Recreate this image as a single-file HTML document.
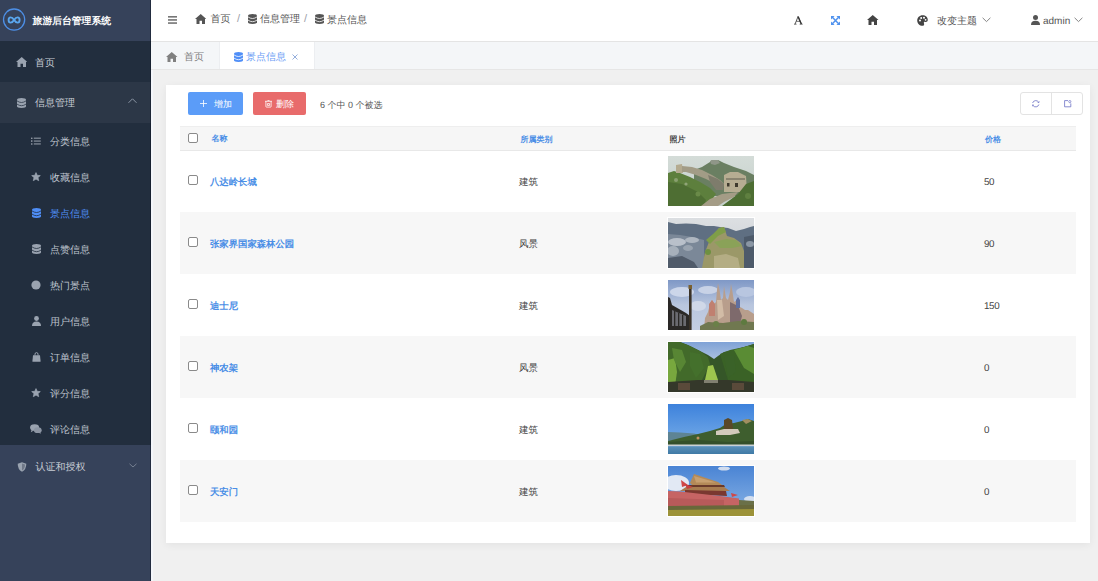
<!DOCTYPE html>
<html><head><meta charset="utf-8">
<style>
*{margin:0;padding:0;box-sizing:border-box}
html,body{width:1098px;height:581px;overflow:hidden;background:#f0f0f0;font-family:"Liberation Sans",sans-serif;text-rendering:geometricPrecision}
.abs{position:absolute;display:block}
.t{position:absolute;white-space:nowrap;line-height:1}
#side{position:absolute;left:0;top:0;width:151px;height:581px;background:#36425a}
.st{color:#c8cdd5;font-size:10px}
#nav{position:absolute;left:151px;top:0;width:947px;height:42px;background:#fff;border-bottom:1px solid #e4e4e4}
#tags{position:absolute;left:151px;top:42px;width:947px;height:28px;background:#f4f6f8;border-bottom:1px solid #e6e6e6}
#card{position:absolute;left:166px;top:85px;width:924px;height:458px;background:#fff;box-shadow:0 2px 8px rgba(0,0,0,.06)}
.bc{color:#555;font-size:10px}
.hd{font-size:8px;font-weight:bold;color:#4a8ee6}
.nm{font-size:9.35px;text-rendering:geometricPrecision;font-weight:bold;color:#4a8ee6}
.cl{font-size:9.5px;color:#444}
.cb{position:absolute;width:10px;height:10px;border:1px solid #8a8a8a;border-radius:2px;background:#fff}
</style></head><body>

<div id="side">
<div class="abs" style="left:0;top:0;width:151px;height:41px;background:#36425a"></div>
<div class="abs" style="left:0;top:41px;width:151px;height:41px;background:#222e3e"></div>
<div class="abs" style="left:0;top:82px;width:151px;height:41px;background:#2c3747"></div>
<div class="abs" style="left:0;top:123px;width:151px;height:322px;background:#222e3e"></div>
<svg class="abs" style="left:0px;top:0px" width="30" height="40" viewBox="0 0 30 40" ><circle cx="14.1" cy="19.6" r="10.6" fill="none" stroke="#4d8fe6" stroke-width="1.3"/><path d="M14.1 20 C12 16.5 8.6 16.5 8.6 20 C8.6 23.5 12 23.5 14.1 20 C16.2 16.5 19.6 16.5 19.6 20 C19.6 23.5 16.2 23.5 14.1 20Z" fill="none" stroke="#5aa7ef" stroke-width="1.9"/></svg>
<div class="t" style="left:32.6px;top:16.6px;font-size:9.8px;font-weight:bold;color:#fff">旅游后台管理系统</div>
<svg class="abs" style="left:15.8px;top:57.3px" width="11.5" height="10" viewBox="0 0 11.5 10" ><path fill="#9aa3b0" d="M5.75 0 L11.5 5.1 L10 5.1 L10 10 L7 10 L7 6.8 L4.5 6.8 L4.5 10 L1.5 10 L1.5 5.1 L0 5.1 Z"/></svg>
<div class="t st" style="left:35px;top:58.5px">首页</div>
<svg class="abs" style="left:17.3px;top:97.5px" width="9" height="10" viewBox="0 0 9 10" ><path fill="#9aa3b0" d="M0 1.7 Q0 0 4.5 0 Q9 0 9 1.7 V8.3 Q9 10 4.5 10 Q0 10 0 8.3Z"/><path d="M0 2.9 Q4.5 6.1 9 2.9 M0 6.1 Q4.5 9.3 9 6.1" fill="none" stroke="#2c3747" stroke-width="0.8"/></svg>
<div class="t st" style="left:35px;top:99px">信息管理</div>
<svg class="abs" style="left:128px;top:97.5px" width="9" height="6" viewBox="0 0 9 6" ><path d="M0.5 4.8 L4.5 0.8 L8.5 4.8" fill="none" stroke="#8c96a5" stroke-width="1"/></svg>
<div class="t st" style="left:50px;top:137.5px;color:#bfc5cf">分类信息</div>
<svg class="abs" style="left:31px;top:137px" width="10" height="8" viewBox="0 0 10 8" ><g fill="#aab1bc"><circle cx="0.8" cy="1.2" r="0.8"/><circle cx="0.8" cy="4.1" r="0.8"/><circle cx="0.8" cy="7" r="0.8"/><rect x="2.8" y="0.7" width="7" height="0.9"/><rect x="2.8" y="3.6" width="7" height="0.9"/><rect x="2.8" y="6.5" width="7" height="0.9"/></g></svg>
<div class="t st" style="left:50px;top:173.5px;color:#bfc5cf">收藏信息</div>
<svg class="abs" style="left:31px;top:172px" width="10" height="10" viewBox="0 0 10 10" ><path fill="#9aa3b0" stroke="#9aa3b0" stroke-width="0.7" stroke-linejoin="round" d="M5 0.6 L6.2 3.3 L9.3 3.6 L7 5.6 L7.7 8.7 L5 7.1 L2.3 8.7 L3 5.6 L0.7 3.6 L3.8 3.3Z"/></svg>
<div class="t st" style="left:50px;top:209.5px;color:#4f8ef7">景点信息</div>
<svg class="abs" style="left:32px;top:208px" width="9" height="10" viewBox="0 0 9 10" ><path fill="#4f8ef7" d="M0 1.7 Q0 0 4.5 0 Q9 0 9 1.7 V8.3 Q9 10 4.5 10 Q0 10 0 8.3Z"/><path d="M0 2.9 Q4.5 6.1 9 2.9 M0 6.1 Q4.5 9.3 9 6.1" fill="none" stroke="#222e3e" stroke-width="0.8"/></svg>
<div class="t st" style="left:50px;top:245.5px;color:#bfc5cf">点赞信息</div>
<svg class="abs" style="left:32px;top:244px" width="9" height="10" viewBox="0 0 9 10" ><path fill="#9aa3b0" d="M0 1.7 Q0 0 4.5 0 Q9 0 9 1.7 V8.3 Q9 10 4.5 10 Q0 10 0 8.3Z"/><path d="M0 2.9 Q4.5 6.1 9 2.9 M0 6.1 Q4.5 9.3 9 6.1" fill="none" stroke="#222e3e" stroke-width="0.8"/></svg>
<div class="t st" style="left:50px;top:281.5px;color:#bfc5cf">热门景点</div>
<svg class="abs" style="left:31px;top:280px" width="10" height="10" viewBox="0 0 10 10" ><circle cx="5" cy="5" r="4.6" fill="#9aa3b0"/></svg>
<div class="t st" style="left:50px;top:317.5px;color:#bfc5cf">用户信息</div>
<svg class="abs" style="left:31.5px;top:316px" width="9" height="10" viewBox="0 0 9 10" ><g fill="#9aa3b0"><circle cx="4.5" cy="2.5" r="2.4"/><path d="M0 10 Q0 5.5 4.5 5.5 Q9 5.5 9 10Z"/></g></svg>
<div class="t st" style="left:50px;top:353.5px;color:#bfc5cf">订单信息</div>
<svg class="abs" style="left:31.5px;top:352px" width="9" height="10" viewBox="0 0 9 10" ><g fill="#9aa3b0"><path d="M3 3.6 L3 2.2 Q3 0.6 4.5 0.6 Q6 0.6 6 2.2 L6 3.6" fill="none" stroke="#9aa3b0" stroke-width="1"/><path d="M1 3.2 H8 L8.6 9.2 Q8.6 9.8 8 9.8 H1 Q0.4 9.8 0.4 9.2Z"/></g></svg>
<div class="t st" style="left:50px;top:389.5px;color:#bfc5cf">评分信息</div>
<svg class="abs" style="left:31px;top:388px" width="10" height="10" viewBox="0 0 10 10" ><path fill="#9aa3b0" stroke="#9aa3b0" stroke-width="0.7" stroke-linejoin="round" d="M5 0.6 L6.2 3.3 L9.3 3.6 L7 5.6 L7.7 8.7 L5 7.1 L2.3 8.7 L3 5.6 L0.7 3.6 L3.8 3.3Z"/></svg>
<div class="t st" style="left:50px;top:425.5px;color:#bfc5cf">评论信息</div>
<svg class="abs" style="left:30px;top:424px" width="12" height="10" viewBox="0 0 12 10" ><g fill="#9aa3b0"><ellipse cx="4.6" cy="3.6" rx="4.5" ry="3.3"/><path d="M1.5 6 L0.8 8.2 L3.8 6.6Z"/><ellipse cx="7.8" cy="6.2" rx="3.9" ry="2.9" fill="#8c95a3"/><path d="M10 8 L11 9.8 L8.5 8.8Z" fill="#8c95a3"/></g></svg>
<svg class="abs" style="left:16.5px;top:462px" width="10" height="10" viewBox="0 0 10 10" ><path d="M5 0.3 L9.3 1.8 Q9.3 7.6 5 9.8 Q0.7 7.6 0.7 1.8Z" fill="#9aa3b0"/><path d="M5 1.5 L8 2.6 Q8 6.9 5 8.5Z" fill="#6f7888"/></svg>
<div class="t st" style="left:35.5px;top:462.5px">认证和授权</div>
<svg class="abs" style="left:128.5px;top:462.5px" width="8" height="5" viewBox="0 0 8 5" ><path d="M0.5 0.8 L4 4 L7.5 0.8" fill="none" stroke="#7d8797" stroke-width="0.9"/></svg>
<div class="abs" style="left:150px;top:0;width:1px;height:581px;background:rgba(10,18,30,.45)"></div>
</div>
<div class="abs" style="left:151px;top:70px;width:2px;height:511px;background:#f4f6fa"></div>
<div id="nav"></div>
<svg class="abs" style="left:167.5px;top:16px" width="9" height="8" viewBox="0 0 9 8" ><g fill="#555"><rect x="0" y="0.2" width="9" height="1.3"/><rect x="0" y="3.3" width="9" height="1.3"/><rect x="0" y="6.4" width="9" height="1.3"/></g></svg>
<svg class="abs" style="left:195.3px;top:14.3px" width="11" height="10" viewBox="0 0 11 10" ><path fill="#555" d="M5.75 0 L11.5 5.1 L10 5.1 L10 10 L7 10 L7 6.8 L4.5 6.8 L4.5 10 L1.5 10 L1.5 5.1 L0 5.1 Z"/></svg>
<div class="t bc" style="left:210.5px;top:15px">首页</div>
<div class="t" style="left:237px;top:13.5px;font-size:11px;color:#9aa0a8">/</div>
<svg class="abs" style="left:248px;top:13.7px" width="9" height="10" viewBox="0 0 9 10" ><path fill="#555" d="M0 1.7 Q0 0 4.5 0 Q9 0 9 1.7 V8.3 Q9 10 4.5 10 Q0 10 0 8.3Z"/><path d="M0 2.9 Q4.5 6.1 9 2.9 M0 6.1 Q4.5 9.3 9 6.1" fill="none" stroke="#fff" stroke-width="0.8"/></svg>
<div class="t bc" style="left:260px;top:15px">信息管理</div>
<div class="t" style="left:304px;top:13.5px;font-size:11px;color:#9aa0a8">/</div>
<svg class="abs" style="left:315px;top:13.7px" width="9" height="10" viewBox="0 0 9 10" ><path fill="#555" d="M0 1.7 Q0 0 4.5 0 Q9 0 9 1.7 V8.3 Q9 10 4.5 10 Q0 10 0 8.3Z"/><path d="M0 2.9 Q4.5 6.1 9 2.9 M0 6.1 Q4.5 9.3 9 6.1" fill="none" stroke="#fff" stroke-width="0.8"/></svg>
<div class="t bc" style="left:327px;top:15.5px">景点信息</div>
<svg class="abs" style="left:793.6px;top:15.6px" width="9.0" height="9.0" viewBox="0 0 10 10"><path d="M1.2 8.9 L4.6 0.4 M4.3 0.4 L8.3 8.9" fill="none" stroke="#333" stroke-width="0.9"/><path d="M4.7 0.9 L8.1 8.9" stroke="#333" stroke-width="1.5"/><path d="M2.6 5.9 H6.8 M0 9.1 H2.8 M6.3 9.1 H9.6" stroke="#333" stroke-width="0.8"/></svg>
<svg class="abs" style="left:830.6px;top:15.6px" width="9.0" height="9.0" viewBox="0 0 10 10"><g fill="#4f92ee"><path d="M1.5 1.5 L8.5 8.5 M8.5 1.5 L1.5 8.5" stroke="#4f92ee" stroke-width="1.6"/><path d="M0 0 H4 L0 4Z M10 0 V4 L6 0Z M0 10 V6 L4 10Z M10 10 H6 L10 6Z"/></g></svg>
<svg class="abs" style="left:867px;top:14.5px" width="12" height="10" viewBox="0 0 12 10" ><path fill="#444" d="M5.75 0 L11.5 5.1 L10 5.1 L10 10 L7 10 L7 6.8 L4.5 6.8 L4.5 10 L1.5 10 L1.5 5.1 L0 5.1 Z"/></svg>
<svg class="abs" style="left:916.5px;top:14.5px" width="11" height="11" viewBox="0 0 11 11" ><path fill="#444" d="M5.5 0.2 C8.6 0.2 10.8 2.2 10.8 4.8 C10.8 6.6 9.4 7.2 8.2 6.9 C7.2 6.7 6.5 7.4 7 8.4 C7.5 9.5 6.9 10.8 5.5 10.8 C2.6 10.8 0.2 8.4 0.2 5.5 C0.2 2.6 2.6 0.2 5.5 0.2Z"/><g fill="#fff"><circle cx="3" cy="5.6" r="1"/><circle cx="4.2" cy="3" r="1"/><circle cx="7" cy="2.8" r="1"/><circle cx="8.6" cy="4.8" r="0.9"/></g></svg>
<div class="t bc" style="left:937px;top:16.5px">改变主题</div>
<svg class="abs" style="left:981.5px;top:16.5px" width="9" height="6" viewBox="0 0 9 6" ><path d="M0.6 0.8 L4.5 4.6 L8.4 0.8" fill="none" stroke="#777" stroke-width="0.9"/></svg>
<svg class="abs" style="left:1030.5px;top:15px" width="9" height="10" viewBox="0 0 9 10" ><g fill="#555"><circle cx="4.5" cy="2.6" r="2.5"/><path d="M0 10 Q0 5.8 4.5 5.8 Q9 5.8 9 10Z"/></g></svg>
<div class="t" style="left:1043px;top:17.3px;font-size:10px;color:#555">admin</div>
<svg class="abs" style="left:1074px;top:17px" width="9" height="6" viewBox="0 0 9 6" ><path d="M0.6 0.8 L4.5 4.6 L8.4 0.8" fill="none" stroke="#777" stroke-width="0.9"/></svg>
<div id="tags"></div>
<div class="abs" style="left:219px;top:42px;width:96px;height:27px;background:#fff;border-left:1px solid #eceef1;border-right:1px solid #eceef1"></div>
<svg class="abs" style="left:166px;top:52px" width="12" height="10" viewBox="0 0 12 10" ><path fill="#808080" d="M5.75 0 L11.5 5.1 L10 5.1 L10 10 L7 10 L7 6.8 L4.5 6.8 L4.5 10 L1.5 10 L1.5 5.1 L0 5.1 Z"/></svg>
<div class="t" style="left:184px;top:52.5px;font-size:10px;color:#808080">首页</div>
<svg class="abs" style="left:234px;top:51.5px" width="9" height="10" viewBox="0 0 9 10" ><path fill="#4f8ef7" d="M0 1.7 Q0 0 4.5 0 Q9 0 9 1.7 V8.3 Q9 10 4.5 10 Q0 10 0 8.3Z"/><path d="M0 2.9 Q4.5 6.1 9 2.9 M0 6.1 Q4.5 9.3 9 6.1" fill="none" stroke="#fff" stroke-width="0.8"/></svg>
<div class="t" style="left:246px;top:52.5px;font-size:10px;color:#6b9cf5">景点信息</div>
<svg class="abs" style="left:292px;top:54px" width="6" height="6" viewBox="0 0 6 6" ><path d="M0.5 0.5 L5.5 5.5 M5.5 0.5 L0.5 5.5" stroke="#8aa6d8" stroke-width="0.9"/></svg>
<div id="card"></div>
<div class="abs" style="left:188px;top:92px;width:55px;height:23px;background:#5b9cf8;border-radius:2px"></div>
<svg class="abs" style="left:200.2px;top:100px" width="8" height="8" viewBox="0 0 8 8" ><path d="M3.5 0 V7 M0 3.5 H7" stroke="#fff" stroke-width="0.8"/></svg>
<div class="t" style="left:214px;top:100px;font-size:9px;color:#fff">增加</div>
<div class="abs" style="left:252.5px;top:92px;width:53px;height:23px;background:#e86b6b;border-radius:2px"></div>
<svg class="abs" style="left:264.8px;top:99.8px" width="7" height="8" viewBox="0 0 7 8" ><path d="M0 1.3 H7 M2.5 0.4 H4.5 M0.9 1.3 V6.6 Q0.9 7.1 1.4 7.1 H5.6 Q6.1 7.1 6.1 6.6 V1.3 M2.4 3.6 H4.6 V5.4 H2.4Z" fill="none" stroke="#fff" stroke-width="0.8"/></svg>
<div class="t" style="left:276px;top:100px;font-size:9px;color:#fff">删除</div>
<div class="t" style="left:320px;top:100.7px;font-size:9px;color:#555">6 个中 0 个被选</div>
<div class="abs" style="left:1020px;top:92px;width:63px;height:23px;border:1px solid #e3e3e3;border-radius:3px;background:#fff"></div>
<div class="abs" style="left:1051px;top:92px;width:1px;height:23px;background:#e3e3e3"></div>
<svg class="abs" style="left:1032.3px;top:99.6px" width="8" height="8" viewBox="0 0 8 8" ><path d="M6.6 2.2 A3.3 3.3 0 0 0 0.6 3 M0.9 5.3 A3.3 3.3 0 0 0 6.9 4.5" fill="none" stroke="#6b70c4" stroke-width="0.8"/><path d="M5.6 2.4 L7 2.6 L7.1 1.2 M1.9 5.1 L0.5 4.9 L0.4 6.3" fill="none" stroke="#6b70c4" stroke-width="0.7"/></svg>
<svg class="abs" style="left:1063.8px;top:99.6px" width="8" height="8" viewBox="0 0 8 8" ><path d="M4 0.6 H0.6 V6.8 H6.8 V3.4" fill="none" stroke="#6b70c4" stroke-width="0.8"/><circle cx="5.8" cy="1.6" r="1.1" fill="none" stroke="#6b70c4" stroke-width="0.7"/></svg>
<div class="abs" style="left:180px;top:126px;width:896px;height:25px;background:#f6f6f6;border-top:1px solid #eee;border-bottom:1px solid #e8e8e8"></div>
<div class="cb" style="left:188px;top:132.5px"></div>
<div class="t hd" style="left:211.5px;top:135px">名称</div>
<div class="t hd" style="left:520.5px;top:135.5px">所属类别</div>
<div class="t hd" style="left:669.5px;top:135.5px;color:#444">照片</div>
<div class="t hd" style="left:985px;top:135.5px">价格</div>
<div class="cb" style="left:187.5px;top:175px"></div>
<div class="t nm" style="left:210px;top:177.7px">八达岭长城</div>
<div class="t cl" style="left:519px;top:177.5px">建筑</div>
<div class="t cl" style="left:984px;top:177.5px;font-size:9.8px;letter-spacing:-0.35px">50</div>
<div class="abs" style="left:667px;top:155px;width:88px;height:52px;background:#fff"></div>
<svg class="abs" style="left:668px;top:156px" width="86" height="50" viewBox="0 0 86 50"><defs><linearGradient id="g0sky" x1="0" y1="0" x2="0" y2="1"><stop offset="0" stop-color="#d4dcd8"/><stop offset="1" stop-color="#c4cfca"/></linearGradient></defs><rect width="86" height="50" fill="url(#g0sky)"/><polygon points="26,14 34,11 42,6 44,4 50,4 56,7 66,11 78,15 86,19 86,40 26,40" fill="#6a7f62" /><polygon points="42,5 44,4 50,4 52,7 47,9 43,8" fill="#8f9688" /><polygon points="0,17 6,15 12,17 22,21 32,26 42,32 48,38 40,50 0,50" fill="#5d7f3d" /><polygon points="0,26 14,28 30,36 38,44 36,50 0,50" fill="#4e6e33" /><circle cx="8" cy="24" r="2" fill="#8aa070"/><circle cx="18" cy="28" r="1.6" fill="#90a478"/><circle cx="30" cy="38" r="2.5" fill="#6a8a48"/><polygon points="8,9 14,8 15,17 8,17" fill="#b4ab90" /><polygon points="14,10 24,11 34,14 44,19 52,24 56,28 54,32 46,27 38,23 28,19 18,16 14,16" fill="#a29c86" /><polygon points="40,19 50,23 56,28 55,34 48,34 42,26" fill="#7e7c6c" /><polygon points="56,19 62,16 70,16 78,20 79,36 56,36" fill="#b6ad92" /><polygon points="58,22 77,22 77,24 58,24" fill="#8a8470" /><rect x="59" y="27" width="2.5" height="3.5" fill="#3e3a2e"/><rect x="67" y="27" width="3" height="4" fill="#3e3a2e"/><polygon points="33,50 42,43 54,38 70,36 66,41 56,46 50,50" fill="#a49c86" /><polygon points="54,50 62,44 70,38 78,28 86,25 86,50" fill="#4d6e33" /><circle cx="80" cy="40" r="3" fill="#5f8040"/></svg>
<div class="abs" style="left:180px;top:212px;width:896px;height:62px;background:#f7f7f7"></div>
<div class="cb" style="left:187.5px;top:237px"></div>
<div class="t nm" style="left:210px;top:239.7px">张家界国家森林公园</div>
<div class="t cl" style="left:519px;top:239.5px">风景</div>
<div class="t cl" style="left:984px;top:239.5px;font-size:9.8px;letter-spacing:-0.35px">90</div>
<div class="abs" style="left:667px;top:217px;width:88px;height:52px;background:#fff"></div>
<svg class="abs" style="left:668px;top:218px" width="86" height="50" viewBox="0 0 86 50"><defs><linearGradient id="g1sky" x1="0" y1="0" x2="0" y2="1"><stop offset="0" stop-color="#dcdfe2"/><stop offset="1" stop-color="#c8cdd2"/></linearGradient></defs><rect width="86" height="50" fill="url(#g1sky)"/><polygon points="0,4 8,6 18,5.5 28,6 38,8 46,8 52,9 60,10 68,13 76,11 82,9 86,8 86,50 0,50" fill="#5f6f82" /><polygon points="0,16 12,17 24,19 36,22 36,50 0,50" fill="#7b8898" /><ellipse cx="9" cy="24" rx="9" ry="4" fill="#b9c0ca"/><ellipse cx="24" cy="22" rx="7" ry="3" fill="#aeb6c0"/><ellipse cx="5" cy="33" rx="6" ry="5" fill="#a7b0bb"/><ellipse cx="20" cy="30" rx="5" ry="3" fill="#9aa4b0"/><polygon points="0,40 14,38 26,44 30,50 0,50" fill="#505b6a" /><polygon points="76,19 86,17 86,50 76,50" fill="#4d5a6a" /><ellipse cx="82" cy="26" rx="4" ry="3" fill="#8a96a4"/><polygon points="34,50 37,34 41,24 46,17 51,10 56,9 59,18 66,20 73,25 76,33 76,50" fill="#9b9868" /><polygon points="38,22 45,16 51,10 56,9 58,14 50,18 42,26" fill="#7f9e48" /><polygon points="46,24 58,21 68,22 74,28 64,30 52,30" fill="#8aa258" /><polygon points="46,38 58,36 70,40 72,50 46,50" fill="#b4ad84" /><circle cx="40" cy="34" r="3" fill="#6e9040"/></svg>
<div class="cb" style="left:187.5px;top:299px"></div>
<div class="t nm" style="left:210px;top:301.7px">迪士尼</div>
<div class="t cl" style="left:519px;top:301.5px">建筑</div>
<div class="t cl" style="left:984px;top:301.5px;font-size:9.8px;letter-spacing:-0.35px">150</div>
<div class="abs" style="left:667px;top:279px;width:88px;height:52px;background:#fff"></div>
<svg class="abs" style="left:668px;top:280px" width="86" height="50" viewBox="0 0 86 50"><defs><linearGradient id="g2sky" x1="0" y1="0" x2="0" y2="1"><stop offset="0" stop-color="#7f98c6"/><stop offset="0.5" stop-color="#b9c6de"/><stop offset="1" stop-color="#c4cee2"/></linearGradient></defs><rect width="86" height="50" fill="url(#g2sky)"/><ellipse cx="14" cy="12" rx="12" ry="5" fill="#ccd6ea"/><ellipse cx="40" cy="10" rx="10" ry="4" fill="#c8d2e6"/><ellipse cx="78" cy="12" rx="10" ry="5" fill="#b8c6e0"/><ellipse cx="30" cy="26" rx="8" ry="5" fill="#d0d8e8"/><polygon points="36,50 37,38 40,32 42,24 44,20 46,24 48,22 49,10 50,3 51.5,10 53,20 55,18 56,6 58,18 60,20 62,12 63,4 64.5,12 66,22 69,20 70,26 74,28 77,30 80,30 86,34 86,50" fill="#b89e8c" /><polygon points="49,20 54,20 56,36 50,40" fill="#d2bca6" /><polygon points="62,22 70,26 74,36 72,44 62,44" fill="#7e6a6c" /><polygon points="41,24 44,20 47,24 47,36 41,36" fill="#c08070" /><polygon points="68,20 70,17 72,20 72,28 68,28" fill="#6070a0" /><polygon points="32,46 40,42 55,43 70,41 86,42 86,50 32,50" fill="#707850" /><circle cx="48" cy="44" r="3" fill="#6a8048"/><circle cx="76" cy="42" r="3" fill="#5e7a40"/><polygon points="0,17 2,18 4,25 18,33 22,36 22,50 0,50" fill="#2a2826" /><polygon points="4,30 18,36 18,46 4,46" fill="#6a6a70" /><rect x="6" y="31" width="1.3" height="15" fill="#2a2826"/><rect x="10" y="33" width="1.3" height="13" fill="#2a2826"/><rect x="14" y="35" width="1.3" height="11" fill="#2a2826"/><rect x="21" y="6" width="2.6" height="44" fill="#3a3228"/><rect x="20.5" y="5" width="3.5" height="4" fill="#7a6030"/></svg>
<div class="abs" style="left:180px;top:336px;width:896px;height:62px;background:#f7f7f7"></div>
<div class="cb" style="left:187.5px;top:361px"></div>
<div class="t nm" style="left:210px;top:363.7px">神农架</div>
<div class="t cl" style="left:519px;top:363.5px">风景</div>
<div class="t cl" style="left:984px;top:363.5px;font-size:9.8px;letter-spacing:-0.35px">0</div>
<div class="abs" style="left:667px;top:341px;width:88px;height:52px;background:#fff"></div>
<svg class="abs" style="left:668px;top:342px" width="86" height="50" viewBox="0 0 86 50"><rect width="86" height="50" fill="#355628"/><defs><linearGradient id="g3sky" x1="0" y1="0" x2="0" y2="1"><stop offset="0" stop-color="#7fa2d6"/><stop offset="1" stop-color="#a9c0e0"/></linearGradient></defs><polygon points="12,0 86,0 86,2 76,5 66,8 56,10 50,14 46,17 40,13 30,8 20,3" fill="url(#g3sky)" /><polygon points="0,0 12,0 22,4 32,9 40,15 42,22 34,38 0,42" fill="#426a2a" /><polygon points="52,12 62,8 76,5 86,2 86,42 60,38" fill="#3a6226" /><polygon points="0,18 7,16 9,30 7,44 0,44" fill="#78a83e" /><polygon points="4,6 14,8 18,20 12,30 6,18" fill="#588634" /><polygon points="66,8 80,4 86,6 86,32 76,26" fill="#5a8c34" /><polygon points="22,10 32,12 36,26 28,36 22,24" fill="#44702c" /><polygon points="56,14 66,14 68,30 60,36" fill="#3a6228" /><polygon points="37,38 40,24 45,23 50,38" fill="#9ec54e" /><polygon points="0,40 30,38 60,38 86,40 86,50 0,50" fill="#34382a" /><rect x="10" y="41" width="12" height="7" fill="#5a4a3a"/><rect x="64" y="41" width="12" height="7" fill="#5a4a3a"/><rect x="36" y="38" width="14" height="3" fill="#808070"/></svg>
<div class="cb" style="left:187.5px;top:423px"></div>
<div class="t nm" style="left:210px;top:425.7px">颐和园</div>
<div class="t cl" style="left:519px;top:425.5px">建筑</div>
<div class="t cl" style="left:984px;top:425.5px;font-size:9.8px;letter-spacing:-0.35px">0</div>
<div class="abs" style="left:667px;top:403px;width:88px;height:52px;background:#fff"></div>
<svg class="abs" style="left:668px;top:404px" width="86" height="50" viewBox="0 0 86 50"><defs><linearGradient id="g4sky" x1="0" y1="0" x2="0" y2="1"><stop offset="0" stop-color="#3d82dc"/><stop offset="1" stop-color="#84b6ea"/></linearGradient></defs><rect width="86" height="50" fill="url(#g4sky)"/><polygon points="0,28 12,28.5 26,29.5 36,32 0,37" fill="#5e8494" /><polygon points="0,37 16,33 30,30 42,27 52,24 58,20 66,19 74,17 80,15 86,17 86,41 0,41" fill="#3e5e2e" /><polygon points="0,38 30,36 60,38 86,37 86,41 0,41" fill="#34502a" /><polygon points="48,27 56,25 70,25 72,29 62,31 48,31" fill="#d2cabb" /><polygon points="56,16 60,14 64,16 65,25 56,25" fill="#5a4828" /><polygon points="74,16 80,15 84,17 78,20" fill="#a08e60" /><circle cx="30" cy="34" r="1.5" fill="#c09060"/><rect x="0" y="40.5" width="86" height="1.8" fill="#cbd2d4"/><defs><linearGradient id="g4w" x1="0" y1="0" x2="0" y2="1"><stop offset="0" stop-color="#5b90b8"/><stop offset="1" stop-color="#3f7aa6"/></linearGradient></defs><rect x="0" y="42.3" width="86" height="7.7" fill="url(#g4w)"/></svg>
<div class="abs" style="left:180px;top:460px;width:896px;height:62px;background:#f7f7f7"></div>
<div class="cb" style="left:187.5px;top:485px"></div>
<div class="t nm" style="left:210px;top:487.7px">天安门</div>
<div class="t cl" style="left:519px;top:487.5px">建筑</div>
<div class="t cl" style="left:984px;top:487.5px;font-size:9.8px;letter-spacing:-0.35px">0</div>
<div class="abs" style="left:667px;top:465px;width:88px;height:52px;background:#fff"></div>
<svg class="abs" style="left:668px;top:466px" width="86" height="50" viewBox="0 0 86 50"><defs><linearGradient id="g5sky" x1="0" y1="0" x2="0" y2="1"><stop offset="0" stop-color="#4a84d4"/><stop offset="1" stop-color="#8ab4e6"/></linearGradient></defs><rect width="86" height="50" fill="url(#g5sky)"/><ellipse cx="8" cy="17" rx="13" ry="8" fill="#e2e9f4"/><ellipse cx="56" cy="2.5" rx="6" ry="2" fill="#d0dcee"/><ellipse cx="82" cy="33" rx="6" ry="3" fill="#d4dff0"/><polygon points="22,17 26,8 50,16 54,19 24,19" fill="#b48a58" /><polygon points="26,10 48,16.5 28,16.5" fill="#c8a070" /><polygon points="20,19 56,19 57,21 20,21" fill="#6a3a2a" /><polygon points="12,25 18,21 56,21 62,25" fill="#a87c50" /><polygon points="17,24 58,25 59,30 17,28" fill="#7a3830" /><polygon points="13,14 20,19 14,21" fill="#d04848"/><polygon points="17,18 25,21 19,23" fill="#c84040"/><polygon points="63,27 70,29 64,31" fill="#d04848"/><polygon points="0,25 12,25.5 56,30.5 71,32.5 71,40 0,41" fill="#c66464" /><polygon points="0,32 56,34 56,40 0,41" fill="#b85a5a" /><polygon points="71,34 86,35 86,40 71,40" fill="#6a7048" /><polygon points="0,40 86,39 86,44 0,44" fill="#68683a" /><polygon points="0,44 86,43 86,50 0,50" fill="#9c9238" /></svg>
</body></html>
